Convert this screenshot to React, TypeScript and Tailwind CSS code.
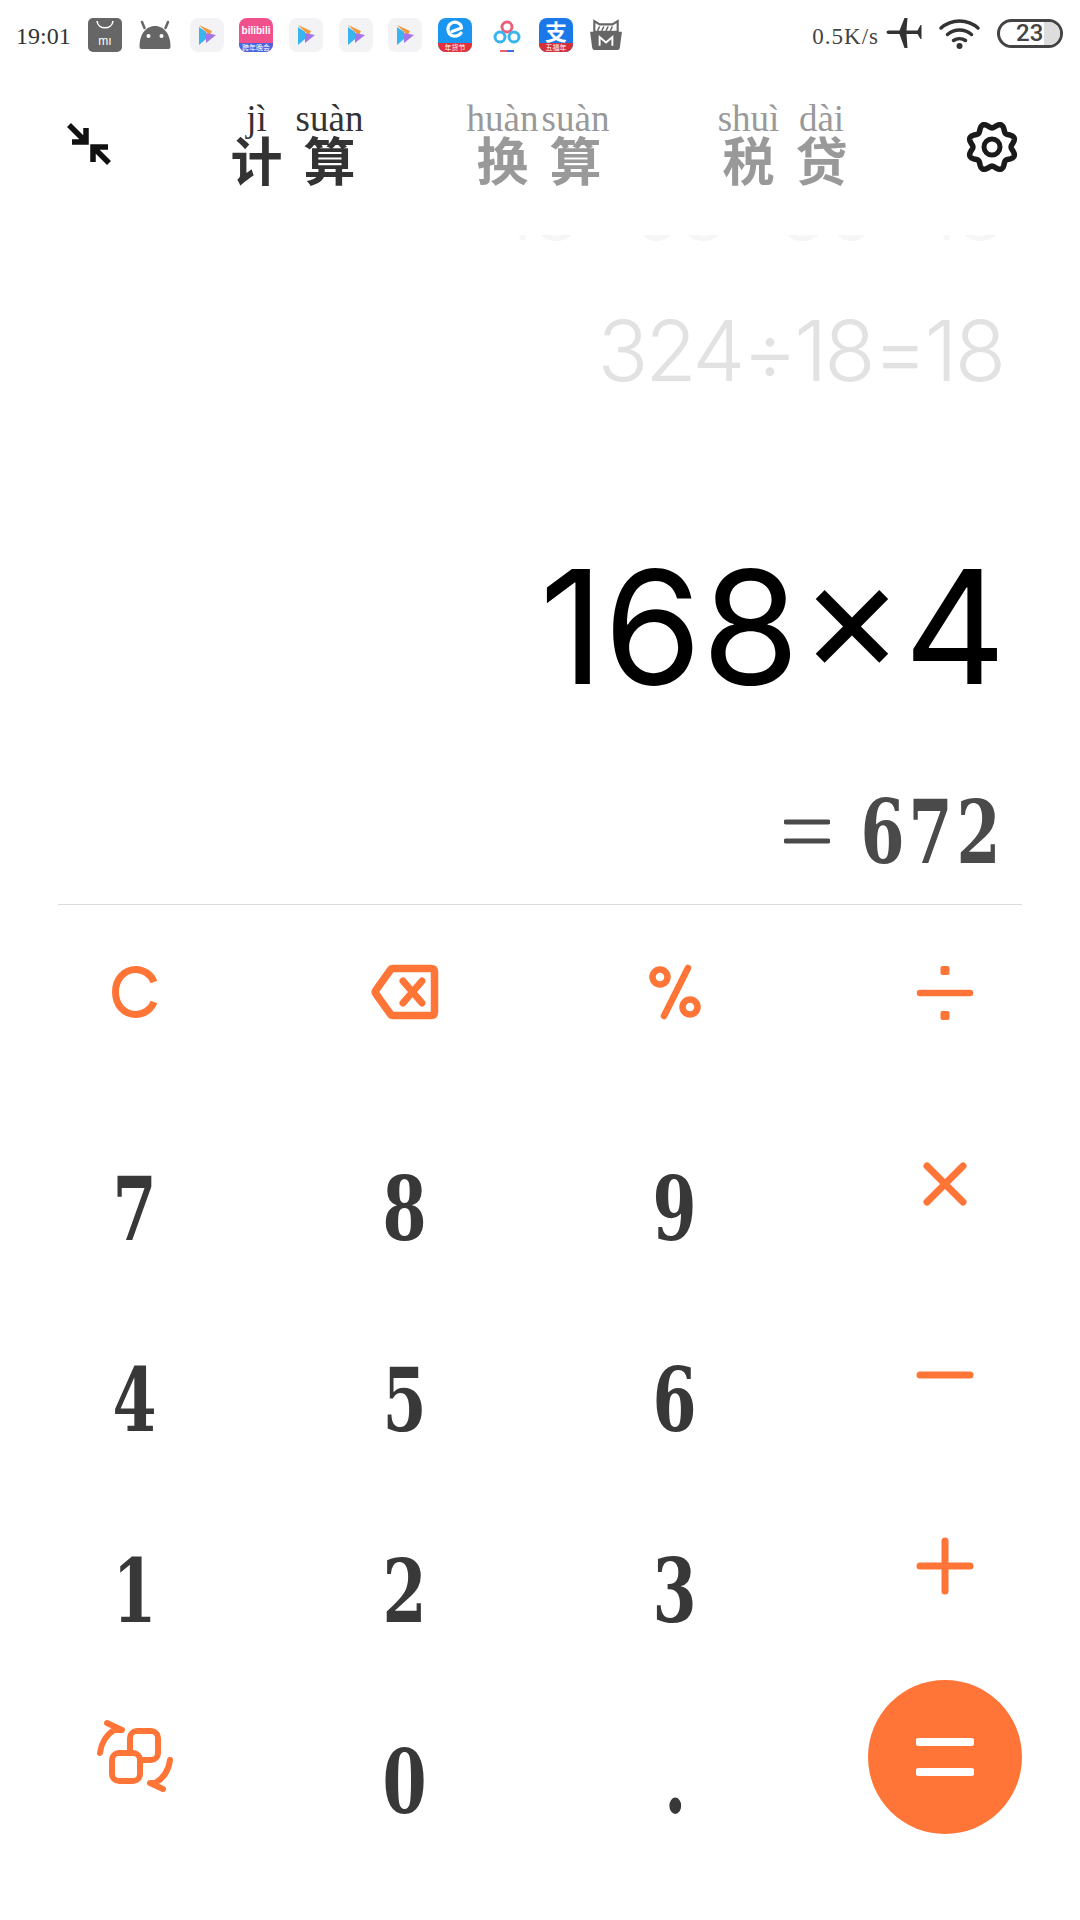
import React from "react";

const serif = "font-['Liberation_Serif',serif]";
const slab = "font-['DejaVu_Serif',serif]";

function Play() {
  return (
    <div className="w-[34px] h-[34px] rounded-[8px] bg-[#f3f3f5] flex items-center justify-center">
      <svg width="20" height="22" viewBox="0 0 20 22">
        <path d="M2 3 L2 21 L9 15 L9 8 Z" fill="#3ab4ee" />
        <path d="M2 1 L9 8 L13 11 L15 7 Z" fill="#f29a3c" />
        <path d="M9 9 L19 11 L9 19 Z" fill="#a474e8" />
      </svg>
    </div>
  );
}

function Status() {
  return (
    <div className="h-[68px] flex items-center pl-[16px] pr-[17px] pt-[1px]">
      <span className={`${serif} text-[24px] text-[#333] w-[72px] mt-[2px]`}>19:01</span>
      <div className="flex items-center w-[50px]">
        <div className="w-[34px] h-[34px] rounded-[5px] bg-[#666] relative flex flex-col items-center overflow-hidden">
          <svg width="34" height="34" viewBox="0 0 34 34" className="absolute inset-0">
            <path d="M9 3 C10 12 24 12 25 3" fill="none" stroke="#fff" strokeWidth="1.6" />
          </svg>
          <span className="absolute top-[17px] font-['Liberation_Sans',sans-serif] text-[12px] leading-[12px] text-white">mı</span>
        </div>
      </div>
      <div className="flex items-center w-[52px]">
        <svg width="34" height="30" viewBox="0 0 33 30">
          <path d="M1 27 C1 12 9 6 16.500 6 C24 6 32 12 32 27 Q32 29 30 29 L3 29 Q1 29 1 27 Z" fill="#666" />
          <path d="M6 8 L3.500 2 M27 8 L29.500 2" stroke="#666" strokeWidth="2.500" strokeLinecap="round" />
          <circle cx="10" cy="16" r="2" fill="#fff" />
          <circle cx="23" cy="16" r="2" fill="#fff" />
        </svg>
      </div>
      <div className="w-[49px]"><Play /></div>
      <div className="w-[50px]">
        <div className="w-[34px] h-[34px] rounded-[8px] bg-[#f0508c] overflow-hidden flex flex-col items-center">
          <span className="h-[25px] pt-[6px] font-['Liberation_Sans',sans-serif] font-bold text-[10px] leading-[14px] text-white">bilibili</span>
          <span className="w-full h-[9px] bg-[#4a63e0] text-[7px] leading-[9px] text-center text-white font-['Noto_Sans_CJK_SC',sans-serif]">跨年晚会</span>
        </div>
      </div>
      <div className="w-[50px]"><Play /></div>
      <div className="w-[49px]"><Play /></div>
      <div className="w-[50px]"><Play /></div>
      <div className="w-[55px]">
        <div className="w-[34px] h-[34px] rounded-[8px] bg-[#1a96f0] overflow-hidden flex flex-col items-center">
          <div className="h-[25px] flex items-center">
            <svg width="22" height="22" viewBox="0 0 22 22">
              <path d="M17 14 C13 19 5 18 4 11 C3.500 5 9 2 13 3.500 C16 4.500 17.500 7 17.500 9 L8 12.500" fill="none" stroke="#fff" strokeWidth="3.200" strokeLinecap="round" />
            </svg>
          </div>
          <span className="w-full h-[9px] bg-[#e5303a] text-[7px] leading-[9px] text-center text-white font-['Noto_Sans_CJK_SC',sans-serif]">年货节</span>
        </div>
      </div>
      <div className="w-[46px]">
        <svg width="28" height="34" viewBox="0 0 28 34">
          <circle cx="14" cy="9" r="5" fill="none" stroke="#e8607a" strokeWidth="3" />
          <circle cx="7" cy="19" r="5" fill="none" stroke="#3ab4ee" strokeWidth="3" />
          <circle cx="21" cy="19" r="5" fill="none" stroke="#3ab4ee" strokeWidth="3" />
          <path d="M7 33 H14" stroke="#e8607a" strokeWidth="2" />
          <path d="M14 33 H21" stroke="#3a6cee" strokeWidth="2" />
        </svg>
      </div>
      <div className="w-[50px]">
        <div className="w-[34px] h-[34px] rounded-[8px] bg-[#1a78e8] overflow-hidden flex flex-col items-center">
          <span className="h-[25px] font-['Noto_Sans_CJK_SC',sans-serif] font-bold text-[22px] leading-[25px] text-white">支</span>
          <span className="w-full h-[9px] bg-[#d5303a] text-[7px] leading-[9px] text-center text-white font-['Noto_Sans_CJK_SC',sans-serif]">五福年</span>
        </div>
      </div>
      <div className="w-[34px]">
        <svg width="34" height="32" viewBox="0 0 32 30">
          <path d="M5 12 L5 2 L10 5 H22 L27 2 L27 12 Z" fill="none" stroke="#666" strokeWidth="2" />
          <path d="M12 11 L14 7 M16 11 L18 7 M20 11 L22 7 M8 11 L10 7" stroke="#666" strokeWidth="1.500" />
          <path d="M1 12 H31 L29 27 Q29 29 27 29 H5 Q3 29 3 27 Z" fill="#666" />
          <path d="M10 25 V17 L16 22 L22 17 V25" fill="none" stroke="#fff" strokeWidth="1.800" />
        </svg>
      </div>
      <span className={`${serif} text-[23px] text-[#444] tracking-[1px] ml-auto mt-[6px] whitespace-nowrap`}>0.5K/s</span>
      <svg width="37" height="32" viewBox="0 0 36 32" className="ml-[7px] mb-[3px] shrink-0">
        <path d="M0 15 Q0 13.500 2 13.500 L13 13.500 L18 1 L21 1 L20 13.500 L31 13.500 L34 8 L35 8 L35 22 L34 22 L31 17 L20 17 L21 31 L18 31 L13 17 L2 17 Q0 17 0 15 Z" fill="#333" />
      </svg>
      <svg width="43" height="32" viewBox="0 0 42 32" className="ml-[15px] mb-[3px] shrink-0">
        <path d="M2.500 11 C13 1.500 29 1.500 39.500 11" fill="none" stroke="#333" strokeWidth="3.500" strokeLinecap="round" />
        <path d="M9 17.500 C16 11.500 26 11.500 33 17.500" fill="none" stroke="#333" strokeWidth="3.500" strokeLinecap="round" />
        <path d="M15 23.500 C18.500 21 23.500 21 27 23.500" fill="none" stroke="#333" strokeWidth="3.500" strokeLinecap="round" />
        <circle cx="21" cy="29" r="3" fill="#333" />
      </svg>
      <div className="ml-[16px] mb-[3px] w-[66px] h-[29px] shrink-0 rounded-full border-[3px] border-[#444] relative flex items-center overflow-hidden">
        <div className="absolute right-0 top-0 bottom-0 w-[16px] bg-[#ddd]" />
        <span className="relative ml-[16px] font-['Roboto',sans-serif] font-medium text-[24px] leading-[24px] text-[#444]">23</span>
      </div>
    </div>
  );
}

function Tab({ a, b, ca, cb, color }: { a: string; b: string; ca: string; cb: string; color: string }) {
  const col = (p: string, c: string) => (
    <div className="w-[73px] flex flex-col items-center">
      <span className={`${serif} text-[37px] leading-[40px] whitespace-nowrap`}>{p}</span>
      <span className="font-['Noto_Sans_CJK_SC',sans-serif] font-bold text-[52px] leading-[52px] -mt-[6px]">{c}</span>
    </div>
  );
  return (
    <div className={`flex w-[146px] ${color}`}>
      {col(a, ca)}
      {col(b, cb)}
    </div>
  );
}

function gearPath() {
  const n = 8;
  const pts: string[] = [];
  for (let i = 0; i <= 240; i++) {
    const t = (i / 240) * Math.PI * 2;
    const r = 21.5 - 2.4 * Math.cos(n * t);
    pts.push(`${(i ? "L" : "M")}${(28 + r * Math.sin(t)).toFixed(2)} ${(28 - r * Math.cos(t)).toFixed(2)}`);
  }
  return pts.join(" ") + "Z";
}

function Header() {
  return (
    <div className="h-[146px] flex items-start">
      <div className="w-[220px] pl-[66px] pt-[53px]">
        <svg width="46" height="46" viewBox="0 0 46 46">
          <path d="M3 4 L20 21 M20 7 V21 H6" fill="none" stroke="#111" strokeWidth="5.500" />
          <path d="M43 42 L27 26 M27 41 V26 H42" fill="none" stroke="#111" strokeWidth="5.500" />
        </svg>
      </div>
      <div className="flex gap-[100px] pt-[31px]">
        <Tab a="jì" b="suàn" ca="计" cb="算" color="text-[#333]" />
        <Tab a="huàn" b="suàn" ca="换" cb="算" color="text-[#999]" />
        <Tab a="shuì" b="dài" ca="税" cb="贷" color="text-[#999]" />
      </div>
      <div className="ml-[106px] pt-[51px]">
        <svg width="56" height="56" viewBox="0 0 56 56">
          <path d={gearPath()} fill="none" stroke="#1a1a1a" strokeWidth="5.500" />
          <circle cx="28" cy="28" r="8" fill="none" stroke="#1a1a1a" strokeWidth="5" />
        </svg>
      </div>
    </div>
  );
}

const orange = "#ff7538";

function OpIcon({ kind }: { kind: string }) {
  const s = { fill: "none", stroke: orange, strokeLinecap: "round" as const, strokeLinejoin: "round" as const };
  if (kind === "C")
    return (
      <svg width="60" height="60" viewBox="0 0 60 60">
        <path d="M49 20 C46 12 38 7.500 31 7.500 C19 7.500 10.500 17 10.500 30 C10.500 43 19 52.500 31 52.500 C38 52.500 46 48 49 40" {...s} strokeWidth="7" strokeLinecap="butt" />
      </svg>
    );
  if (kind === "back")
    return (
      <svg width="68" height="56" viewBox="0 0 68 56">
        <path d="M22 4.500 H60 Q63.500 4.500 63.500 8 V48 Q63.500 51.500 60 51.500 H22 Q20 51.500 19 49.500 L5 30 Q3.500 28 5 26 L19 6.500 Q20 4.500 22 4.500 Z" {...s} strokeWidth="7.500" />
        <path d="M32 17 L51 39 M51 17 L32 39" {...s} strokeWidth="7" />
      </svg>
    );
  if (kind === "%")
    return (
      <svg width="52" height="56" viewBox="0 0 52 56">
        <path d="M39 4 L15 52" {...s} strokeWidth="6.500" />
        <circle cx="11" cy="13" r="7.500" {...s} strokeWidth="6.500" />
        <circle cx="41" cy="43" r="7.500" {...s} strokeWidth="6.500" />
      </svg>
    );
  if (kind === "div")
    return (
      <svg width="58" height="58" viewBox="0 0 58 58">
        <path d="M4 30 H54" {...s} strokeWidth="6.500" />
        <rect x="24.500" y="3" width="9" height="9" rx="2" fill={orange} />
        <rect x="24.500" y="48" width="9" height="9" rx="2" fill={orange} />
      </svg>
    );
  if (kind === "x")
    return (
      <svg width="58" height="58" viewBox="0 0 58 58">
        <path d="M11 11 L47 47 M47 11 L11 47" {...s} strokeWidth="7" />
      </svg>
    );
  if (kind === "-")
    return (
      <svg width="58" height="58" viewBox="0 0 58 58">
        <path d="M4 29 H54" {...s} strokeWidth="7" />
      </svg>
    );
  if (kind === "+")
    return (
      <svg width="58" height="58" viewBox="0 0 58 58">
        <path d="M4 29 H54 M29 4 V54" {...s} strokeWidth="7" />
      </svg>
    );
  return (
    <svg width="80" height="80" viewBox="0 0 80 80">
      <rect x="35" y="14" width="28" height="29" rx="7" {...s} strokeWidth="6" />
      <rect x="17" y="36" width="28" height="28" rx="7" {...s} fill="#fff" strokeWidth="6" />
      <path d="M5 36 C6 27 11 18 19 13 M12 6 L27 13 L19 13" {...s} strokeWidth="6" />
      <path d="M75 43 C74 53 68 62 60 66 M68 72 L55 66 L60 66" {...s} strokeWidth="6" />
    </svg>
  );
}

function Digit({ v }: { v: string }) {
  return (
    <div className="flex items-center justify-center pt-[50px]">
      <span className={`${slab} font-bold inline-block scale-x-[.72] text-[88px] leading-[100px] text-[#383838]`}>{v}</span>
    </div>
  );
}

function Op({ kind }: { kind: string }) {
  return (
    <div className="flex items-center justify-center">
      <OpIcon kind={kind} />
    </div>
  );
}

function ResultDigit({ v }: { v: string }) {
  return (
    <span className={`${slab} font-bold w-[48px] flex justify-center`}>
      <span className="inline-block scale-x-[.72] text-[88px] leading-[100px]">{v}</span>
    </span>
  );
}

export default function App() {
  return (
    <div className="w-[1080px] h-[1920px] bg-white overflow-hidden flex flex-col">
      <Status />
      <Header />
      <div className="h-[690px] pr-[80px] flex flex-col items-end">
        <div className="mt-[21px] -mr-[3px] h-[6px] overflow-hidden w-[560px] flex justify-end">
          <div className="-mt-[65px] whitespace-nowrap font-['Inter',sans-serif] font-light tracking-[-3px] text-[84px] leading-[80px] text-[#f6f6f6]">13×68÷36=18</div>
        </div>
        <div className="mt-[60px] -mr-[3px] font-['Inter',sans-serif] font-light tracking-[-3px] text-[84px] leading-[100px] text-[#e2e2e2]">324÷18=18</div>
        <div className="mt-[126px] -mr-[6px] font-['Inter',sans-serif] text-[158px] leading-[200px] text-black">168×4</div>
        <div className="mt-[55px] -mr-[3px] flex items-center h-[100px] text-[#4a4a4a]">
          <svg width="46" height="30" viewBox="0 0 46 30" className="mr-[29px]">
            <path d="M2 5 H44 M2 24 H44" fill="none" stroke="#4a4a4a" strokeWidth="5" strokeLinecap="round" />
          </svg>
          <ResultDigit v="6" />
          <ResultDigit v="7" />
          <ResultDigit v="2" />
        </div>
      </div>
      <div className="mx-[58px] h-px bg-[#dcdcdc]" />
      <div className="grid grid-cols-4 grid-rows-[183px_191px_191px_191px_191px]">
        <div className="flex items-center justify-center pb-[9px]"><OpIcon kind="C" /></div>
        <div className="flex items-center justify-center pb-[9px]"><OpIcon kind="back" /></div>
        <div className="flex items-center justify-center pb-[9px]"><OpIcon kind="%" /></div>
        <div className="flex items-center justify-center pb-[9px]"><OpIcon kind="div" /></div>
        <Digit v="7" /><Digit v="8" /><Digit v="9" /><Op kind="x" />
        <Digit v="4" /><Digit v="5" /><Digit v="6" /><Op kind="-" />
        <Digit v="1" /><Digit v="2" /><Digit v="3" /><Op kind="+" />
        <Op kind="swap" />
        <Digit v="0" />
        <Digit v="." />
        <div className="flex items-center justify-center">
          <div className="w-[154px] h-[154px] rounded-full bg-[#ff7538] flex items-center justify-center">
            <svg width="58" height="40" viewBox="0 0 58 40">
              <path d="M3 5 H55 M3 35 H55" fill="none" stroke="#fff" strokeWidth="8" strokeLinecap="round" />
            </svg>
          </div>
        </div>
      </div>
    </div>
  );
}
